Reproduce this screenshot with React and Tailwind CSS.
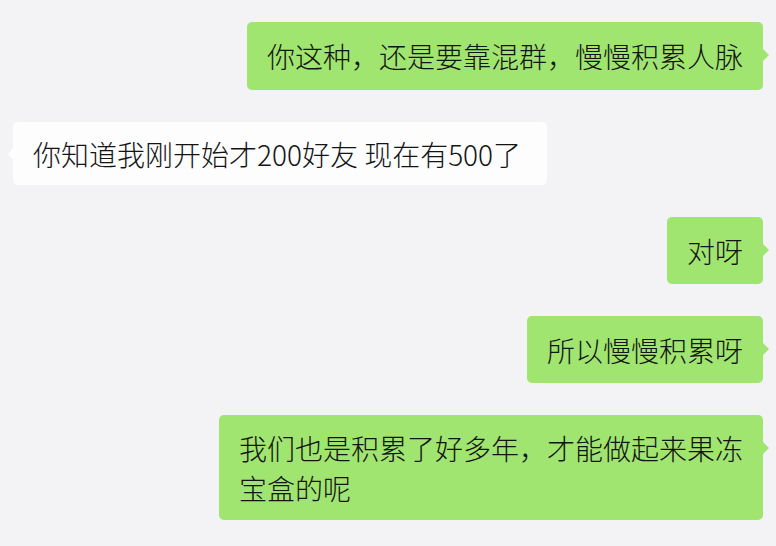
import React from 'react';

const messages = [
  { id: 1, me: true, lines: ['你这种，还是要靠混群，慢慢积累人脉'], pad: 'pt-[14px] pb-[14px]' },
  { id: 2, me: false, lines: ['你知道我刚开始才200好友 现在有500了'], pad: 'pt-[12px] pb-[11px] w-[534px]' },
  { id: 3, me: true, lines: ['对呀'], pad: 'pt-[14px] pb-[13px]' },
  { id: 4, me: true, lines: ['所以慢慢积累呀'], pad: 'pt-[14px] pb-[13px]' },
  { id: 5, me: true, lines: ['我们也是积累了好多年，才能做起来果冻', '宝盒的呢'], pad: 'pt-[13px] pb-[12px]' },
];

function Bubble({ me, lines, pad }) {
  return (
    <div className={me ? 'flex justify-end' : 'flex justify-start'}>
      <div
        className={
          'relative rounded-[5px] px-[20px] text-[28px] leading-[40px] font-light text-[#141414] whitespace-nowrap ' +
          pad +
          (me ? ' bg-[#a0e570]' : ' bg-[#fdfdfe]')
        }
      >
        {/* tail */}
        {me ? (
          <span className="absolute top-[27px] right-[-6px] w-0 h-0 border-y-[6px] border-y-transparent border-l-[6px] border-l-[#a0e570]" />
        ) : (
          <span className="absolute top-[26px] left-[-5px] w-0 h-0 border-y-[6px] border-y-transparent border-r-[5px] border-r-[#fdfdfe]" />
        )}
        {lines.map((l, i) => (
          <div key={i}>{l}</div>
        ))}
      </div>
    </div>
  );
}

export default function App() {
  return (
    <div
      className="w-[776px] h-[546px] overflow-hidden bg-[#f3f3f5] pt-[22px] pl-[13px] pr-[13px] flex flex-col gap-[32px]"
      style={{ fontFamily: '"Noto Sans CJK SC", "Noto Sans", sans-serif' }}
    >
      {messages.map(m => (
        <Bubble key={m.id} {...m} />
      ))}
    </div>
  );
}
